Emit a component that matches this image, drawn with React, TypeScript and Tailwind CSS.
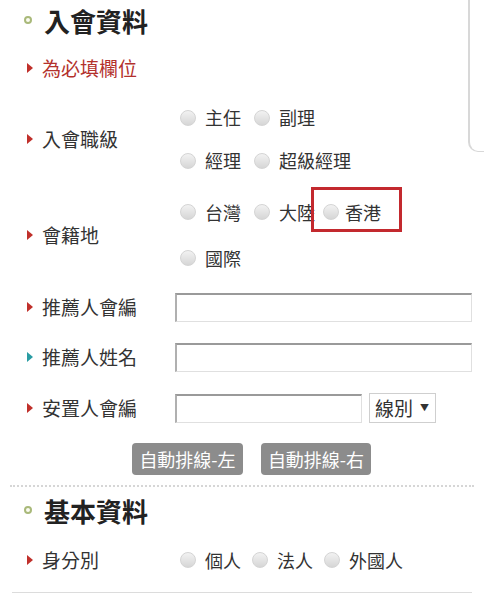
const Radio = () => (
  <span className="inline-block w-[16px] h-[16px] rounded-full border border-[#d4d4d4] bg-[linear-gradient(#f2f2f2,#d6d6d6)] shrink-0" />
);

const Opt = ({ label, className = '' }: { label: string; className?: string }) => (
  <span className={'flex items-center ' + className}>
    <Radio />
    <span className="ml-[9px]">{label}</span>
  </span>
);

const Tri = ({ color = 'border-l-[#c0302b]' }: { color?: string }) => (
  <span className={'inline-block w-0 h-0 border-y-[5px] border-y-transparent border-l-[6px] ' + color} />
);

const Label = ({ text, color, w }: { text: string; color?: string; w: string }) => (
  <div className={'flex items-center gap-[9px] shrink-0 text-[19px] ' + w}>
    <Tri color={color} />
    <span>{text}</span>
  </div>
);

const Heading = ({ text }: { text: string }) => (
  <div className="flex items-center gap-[12px] pl-[24px]">
    <span className="w-[8px] h-[8px] rounded-full border-2 border-[#a9b97a] bg-[#fbfbf3]" />
    <span className="text-[26px] font-bold text-[#222]">{text}</span>
  </div>
);

const Input = ({ w }: { w: string }) => (
  <div className={'h-[29px] bg-white border-t-2 border-l-2 border-t-[#9a9a9a] border-l-[#b0b0b0] border-r border-b border-r-[#e0e0e0] border-b-[#e0e0e0] ' + w} />
);

export default function App() {
  return (
    <div className="relative w-[484px] h-[600px] bg-white overflow-hidden font-['Noto_Sans_CJK_TC',sans-serif] text-[18px] text-[#333]">
      <div className="absolute left-[468px] top-[-20px] w-[30px] h-[172px] border-l-2 border-b border-[#d8d8d8] rounded-bl-[10px]" />

      <div className="h-[40px] flex items-center"><Heading text="入會資料" /></div>

      <div className="h-[56px] flex items-center pl-[27px] gap-[9px] text-[19px] text-[#b3312c]">
        <Tri />
        <span>為必填欄位</span>
      </div>

      <div className="flex items-center pl-[27px]">
        <Label text="入會職級" w="w-[153px]" />
        <div>
          <div className="h-[43px] flex items-center">
            <Opt label="主任" />
            <Opt label="副理" className="ml-[13px]" />
          </div>
          <div className="h-[43px] flex items-center">
            <Opt label="經理" />
            <Opt label="超級經理" className="ml-[13px]" />
          </div>
        </div>
      </div>

      <div className="flex items-center pl-[27px] mt-[7px]">
        <Label text="會籍地" w="w-[153px]" />
        <div>
          <div className="h-[46px] flex items-center">
            <Opt label="台灣" />
            <Opt label="大陸" className="ml-[13px]" />
            <span className="relative flex items-center ml-[8px]">
              <span className="absolute left-[-12px] top-1/2 mt-[-25px] w-[91px] h-[45px] border-[3px] border-[#c3292e]" />
              <Radio />
              <span className="ml-[6px]">香港</span>
            </span>
          </div>
          <div className="h-[46px] flex items-center">
            <Opt label="國際" />
          </div>
        </div>
      </div>

      <div className="h-[52px] flex items-center pl-[27px]">
        <Label text="推薦人會編" w="w-[148px]" />
        <Input w="w-[297px]" />
      </div>

      <div className="h-[48px] flex items-center pl-[27px]">
        <Label text="推薦人姓名" color="border-l-[#2a9ca3]" w="w-[148px]" />
        <Input w="w-[297px]" />
      </div>

      <div className="h-[54px] flex items-center pl-[27px]">
        <Label text="安置人會編" w="w-[148px]" />
        <Input w="w-[187px]" />
        <div className="ml-[7px] h-[30px] w-[67px] border border-[#cfcfcf] flex items-center pl-[5px] gap-[7px]">
          <span className="text-[19px]">線別</span>
          <span className="text-[9px]">▼</span>
        </div>
      </div>

      <div className="pt-[8px] pl-[132px] flex gap-[18px] text-white">
        <span className="h-[32px] w-[111px] rounded-[4px] bg-[#8c8c8c] flex items-center justify-center">自動排線-左</span>
        <span className="h-[32px] w-[110px] rounded-[4px] bg-[#8c8c8c] flex items-center justify-center">自動排線-右</span>
      </div>

      <div className="mt-[10px] mx-[10px] border-t-2 border-dotted border-[#d6d6d6]" />

      <div className="h-[46px] flex items-center"><Heading text="基本資料" /></div>

      <div className="h-[54px] flex items-center pl-[27px]">
        <Label text="身分別" w="w-[153px]" />
        <Opt label="個人" />
        <Opt label="法人" className="ml-[11px]" />
        <Opt label="外國人" className="ml-[11px]" />
      </div>

      <div className="mt-[5px] mx-[12px] border-t border-[#dcdcdc]" />
    </div>
  );
}
